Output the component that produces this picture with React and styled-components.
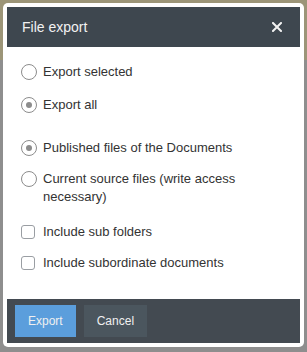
import React from "react"
import styled, { createGlobalStyle } from "styled-components"

const GlobalStyle = createGlobalStyle`
  html, body {
    margin: 0;
    padding: 0;
  }
  body {
    font-family: "Liberation Sans", Arial, sans-serif;
    background: #8e8e8e;
  }
`

const Backdrop = styled.div`
  width: 307px;
  height: 352px;
  box-sizing: border-box;
  padding: 3px;
  background: linear-gradient(to bottom, #9c9578 0, #9c9578 60px, #8e8e8e 60px);
`

const Dialog = styled.div`
  width: 301px;
  height: 344px;
  box-sizing: border-box;
  padding: 4px;
  background: #fff;
  border-radius: 5px;
  display: flex;
  flex-direction: column;
`

const Header = styled.div`
  height: 40px;
  flex: none;
  background: #3e474f;
  display: flex;
  align-items: center;
  justify-content: space-between;
  padding: 0 18px 0 15px;
`

const Title = styled.span`
  color: #f2f2f2;
  font-size: 14px;
`

const CloseButton = styled.button`
  border: 0;
  background: none;
  padding: 0;
  width: 10px;
  height: 10px;
  display: flex;
  cursor: pointer;
`

const Body = styled.div`
  flex: 1;
  padding: 16px 14px 0;
  display: flex;
  flex-direction: column;
`

const Option = styled.label`
  display: flex;
  align-items: flex-start;
  gap: 6px;
  margin-top: ${(p) => p.$top || 0}px;
  font-size: 13px;
  line-height: 18px;
  color: #333;
`

const Radio = styled.span`
  flex: none;
  box-sizing: border-box;
  width: 16px;
  height: 16px;
  margin-top: 1px;
  border: 1.5px solid #8c8c8c;
  border-radius: 50%;
  display: flex;
  align-items: center;
  justify-content: center;
  &::after {
    content: "";
    width: 6px;
    height: 6px;
    border-radius: 50%;
    background: ${(p) => (p.$checked ? "#8c8c8c" : "transparent")};
  }
`

const Check = styled.span`
  flex: none;
  box-sizing: border-box;
  width: 14px;
  height: 14px;
  margin: 2px 2px 0 0;
  border: 1.5px solid #9a9ea3;
  border-radius: 3px;
`

const Footer = styled.div`
  height: 44px;
  flex: none;
  background: #434a51;
  display: flex;
  align-items: center;
  gap: 8px;
  padding: 0 8px;
`

const Button = styled.button`
  height: 32px;
  border: 0;
  padding: 0 13px;
  font-family: "Liberation Sans", Arial, sans-serif;
  font-size: 12px;
  color: #f0f0f0;
  background: ${(p) => (p.$primary ? "#5b9edc" : "#4b565e")};
  cursor: pointer;
`

const RadioOption = ({ checked, top, children }) => (
  <Option $top={top}>
    <Radio $checked={checked} />
    <span>{children}</span>
  </Option>
)

const CheckOption = ({ top, children }) => (
  <Option $top={top}>
    <Check />
    <span>{children}</span>
  </Option>
)

const App = () => {
  return (
    <>
      <GlobalStyle />
      <Backdrop>
        <Dialog>
          <Header>
            <Title>File export</Title>
            <CloseButton aria-label="Close">
              <svg width="10" height="10" viewBox="0 0 10 10">
                <path d="M1 1L9 9M9 1L1 9" stroke="#f2f2f2" strokeWidth="2" strokeLinecap="square" />
              </svg>
            </CloseButton>
          </Header>
          <Body>
            <RadioOption>Export selected</RadioOption>
            <RadioOption checked top={15}>Export all</RadioOption>
            <RadioOption checked top={25}>Published files of the Documents</RadioOption>
            <RadioOption top={13}>Current source files (write access necessary)</RadioOption>
            <CheckOption top={17}>Include sub folders</CheckOption>
            <CheckOption top={13}>Include subordinate documents</CheckOption>
          </Body>
          <Footer>
            <Button $primary>Export</Button>
            <Button>Cancel</Button>
          </Footer>
        </Dialog>
      </Backdrop>
    </>
  )
}

export default App
